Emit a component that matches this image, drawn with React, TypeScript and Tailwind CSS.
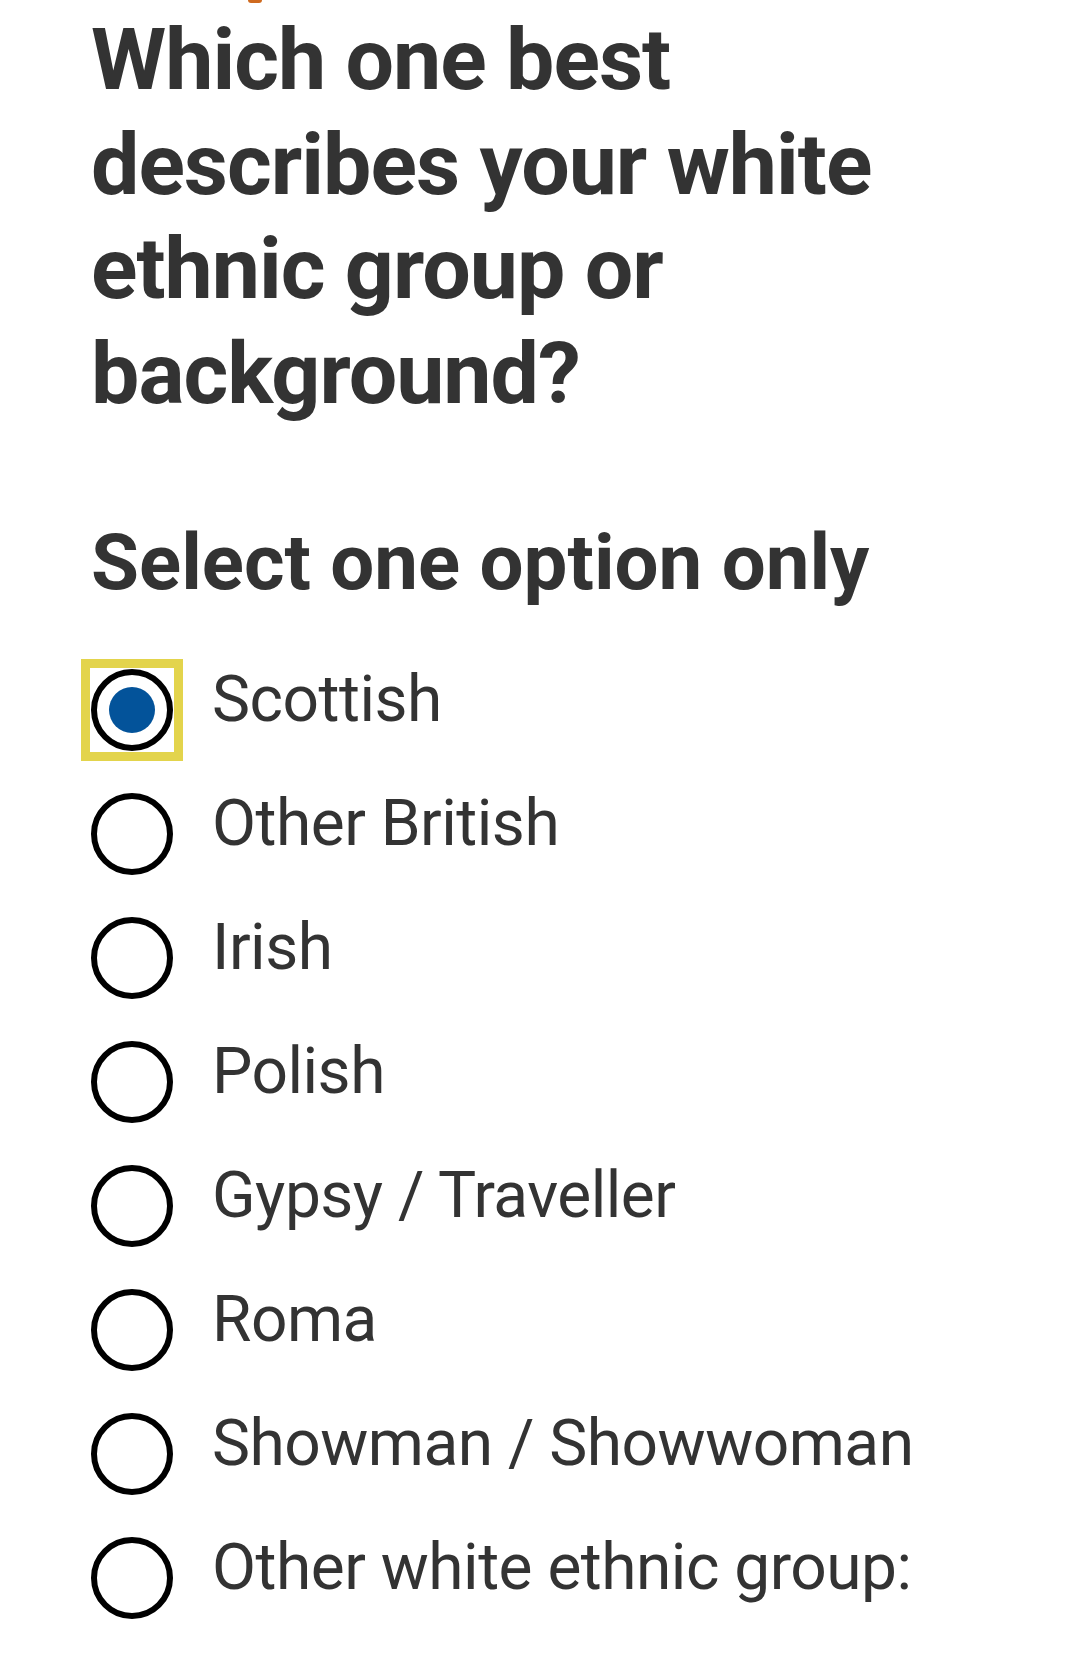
const options = [
  'Scottish',
  'Other British',
  'Irish',
  'Polish',
  'Gypsy / Traveller',
  'Roma',
  'Showman / Showwoman',
  'Other white ethnic group:',
];

function Radio({ checked }: { checked: boolean }) {
  const circle = (
    <span className="flex h-[82px] w-[82px] items-center justify-center rounded-full border-[6px] border-black bg-white">
      {checked && <span className="h-[46px] w-[46px] rounded-full bg-[#03539a]" />}
    </span>
  );
  if (!checked) return <span className="shrink-0">{circle}</span>;
  return (
    <span className="block shrink-0 outline-[9px] outline-offset-[1px] outline-[#e3d44c] outline-solid">
      {circle}
    </span>
  );
}

export default function App() {
  return (
    <div className="min-h-[1678px] bg-white font-['Roboto',sans-serif] text-[#333333]">
      <div className="h-[3px]">
        <div className="ml-[248px] h-[3px] w-[14px] rounded-b-full bg-[#cf6a1f]" />
      </div>
      <div className="pl-[91px] pr-[40px]">
        <h1 className="mt-[5px] text-[86px] font-bold leading-[104.7px] tracking-[-1px]">
          Which one best describes your white ethnic group or background?
        </h1>
        <h2 className="mt-[90px] text-[78px] font-bold leading-[92px]">Select one option only</h2>
        <div className="mt-[60px] flex flex-col gap-[42px]">
          {options.map((label, i) => (
            <label key={label} className="flex items-start gap-[39px]">
              <Radio checked={i === 0} />
              <span className="text-[64px] leading-[62px] tracking-[-0.5px]">{label}</span>
            </label>
          ))}
        </div>
      </div>
    </div>
  );
}
